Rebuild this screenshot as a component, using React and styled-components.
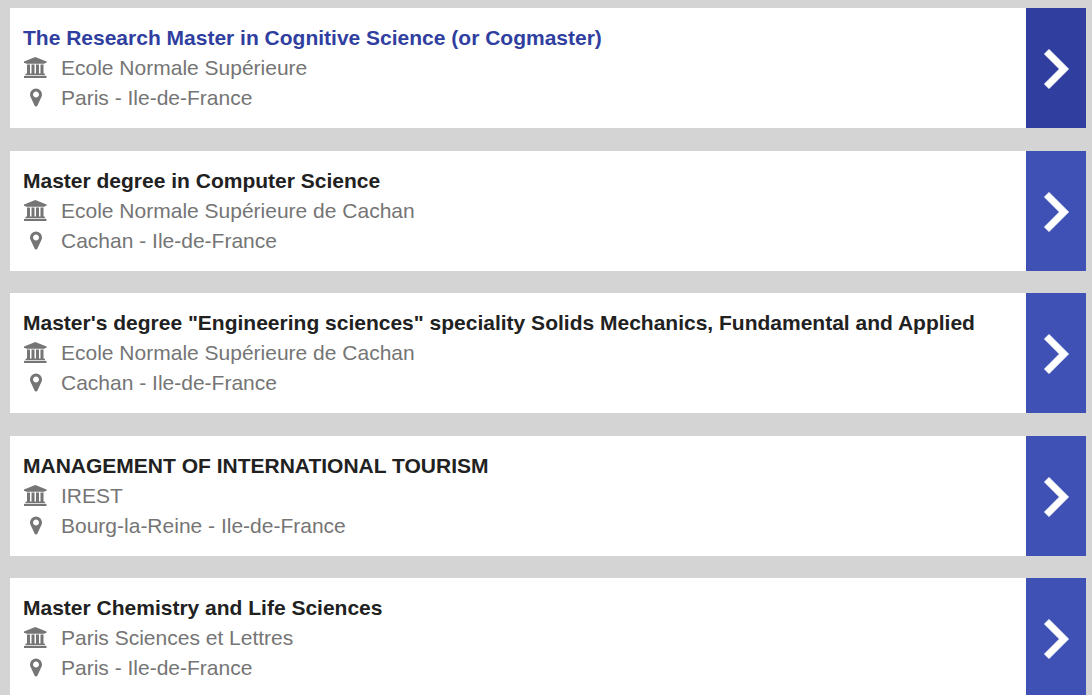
import React from 'react';
import styled, { createGlobalStyle } from 'styled-components';

const GlobalStyle = createGlobalStyle`
  body {
    margin: 0;
    background: #d4d4d4;
    font-family: "Liberation Sans", Arial, sans-serif;
  }
`;

const List = styled.ul`
  list-style: none;
  margin: 0;
  padding: 8px 6px 0 10px;
`;

const Card = styled.li`
  display: flex;
  margin-bottom: 23px;
  background: #fff;

  &:nth-child(even) {
    margin-bottom: 22px;
  }
`;

const Details = styled.div`
  flex: 1;
  min-width: 0;
  padding: 15px 13px;
  font-size: 21px;
  line-height: 30px;
`;

const Title = styled.h2`
  margin: 0;
  font-size: inherit;
  font-weight: bold;
`;

const TitleLink = styled.a`
  color: ${({ $active }) => ($active ? '#303f9f' : '#212121')};
  text-decoration: none;

  &:hover {
    color: #303f9f;
  }
`;

const Info = styled.div`
  display: flex;
  align-items: center;
  gap: 13px;
  color: #757575;
`;

const IconBox = styled.span`
  display: flex;
  align-items: flex-start;
  justify-content: center;
  flex-shrink: 0;
  width: 25px;
  height: 22px;

  svg {
    height: 21px;
    fill: currentColor;
  }
`;

const Arrow = styled.button`
  display: flex;
  align-items: center;
  justify-content: center;
  flex-shrink: 0;
  width: 60px;
  padding: 0;
  border: none;
  background: ${({ $active }) => ($active ? '#303f9f' : '#3f51b5')};
  cursor: pointer;

  &:hover {
    background: #303f9f;
  }
`;

const UniversityIcon = () => (
  <svg viewBox="0 0 1920 1792" aria-hidden="true">
    <path d="M960 0l960 384v128h-128q0 26-20.5 45t-48.5 19h-1526q-28 0-48.5-19t-20.5-45h-128v-128zM256 640h256v768h128v-768h256v768h128v-768h256v768h128v-768h256v768h59q28 0 48.5 19t20.5 45v64h-1664v-64q0-26 20.5-45t48.5-19h59v-768zM1851 1600q28 0 48.5 19t20.5 45v128h-1920v-128q0-26 20.5-45t48.5-19h1782z" />
  </svg>
);

const MarkerIcon = () => (
  <svg viewBox="0 0 1024 1792" aria-hidden="true">
    <path d="M768 640q0-106-75-181t-181-75-181 75-75 181 75 181 181 75 181-75 75-181zm256 0q0 109-33 179l-364 774q-16 33-47.5 52t-67.5 19-67.5-19-46.5-52l-365-774q-33-70-33-179 0-212 150-362t362-150 362 150 150 362z" />
  </svg>
);

const ChevronIcon = () => (
  <svg width="26" height="42" viewBox="0 0 26 42" aria-hidden="true">
    <path
      d="M6 2.5L25.5 22L6 41.5L1.5 37L16.5 22L1.5 7Z"
      fill="#fff"
      stroke="#fff"
      strokeLinejoin="round"
    />
  </svg>
);

const programs = [
  {
    title: 'The Research Master in Cognitive Science (or Cogmaster)',
    school: 'Ecole Normale Supérieure',
    place: 'Paris - Ile-de-France',
    active: true,
  },
  {
    title: 'Master degree in Computer Science',
    school: 'Ecole Normale Supérieure de Cachan',
    place: 'Cachan - Ile-de-France',
  },
  {
    title: 'Master\'s degree "Engineering sciences" speciality Solids Mechanics, Fundamental and Applied',
    school: 'Ecole Normale Supérieure de Cachan',
    place: 'Cachan - Ile-de-France',
  },
  {
    title: 'MANAGEMENT OF INTERNATIONAL TOURISM',
    school: 'IREST',
    place: 'Bourg-la-Reine - Ile-de-France',
  },
  {
    title: 'Master Chemistry and Life Sciences',
    school: 'Paris Sciences et Lettres',
    place: 'Paris - Ile-de-France',
  },
];

function ProgramCard({ title, school, place, active }) {
  return (
    <Card>
      <Details>
        <Title>
          <TitleLink href="#" $active={active}>{title}</TitleLink>
        </Title>
        <Info>
          <IconBox><UniversityIcon /></IconBox>
          {school}
        </Info>
        <Info>
          <IconBox><MarkerIcon /></IconBox>
          {place}
        </Info>
      </Details>
      <Arrow type="button" $active={active} aria-label={`Open ${title}`}>
        <ChevronIcon />
      </Arrow>
    </Card>
  );
}

function App() {
  return (
    <>
      <GlobalStyle />
      <List>
        {programs.map((program) => (
          <ProgramCard key={program.title} {...program} />
        ))}
      </List>
    </>
  );
}

export default App;
